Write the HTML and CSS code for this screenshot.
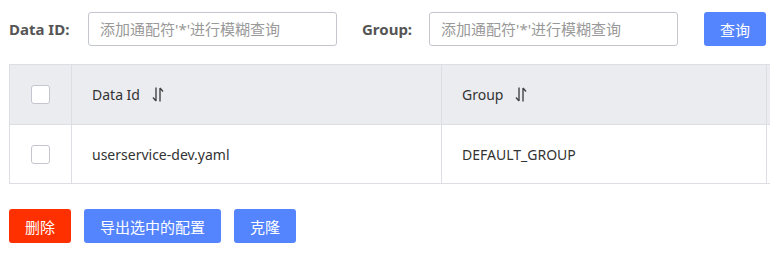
FILE: index.html
```html
<!DOCTYPE html>
<html lang="zh-CN">

<head>
    <meta charset="UTF-8">
    <meta name="viewport" content="width=device-width, initial-scale=1.0">
    <title>配置列表</title>
    <link rel="stylesheet" href="styles.css">
</head>

<body>
    <form class="busca">
        <label class="rotulo">Data ID:</label>
        <input type="text" class="campo" placeholder="添加通配符'*'进行模糊查询" />
        <label class="rotulo rotuloGrupo">Group:</label>
        <input type="text" class="campo" placeholder="添加通配符'*'进行模糊查询" />
        <button type="button" class="btn btnAzul btnQuery">查询</button>
    </form>

    <div class="tabelaArea">
        <table class="tabela">
            <colgroup>
                <col style="width: 62px">
                <col style="width: 370px">
                <col style="width: 325px">
                <col style="width: 200px">
            </colgroup>
            <thead>
                <tr>
                    <th class="check"><span class="caixa"></span></th>
                    <th>Data Id <svg class="ordem" width="12" height="17" viewBox="0 0 12 17">
                            <path d="M4 1.5V15M4 15L1 11.5" />
                            <path d="M8 15.5V2M8 2L11 5.5" />
                        </svg></th>
                    <th>Group <svg class="ordem" width="12" height="17" viewBox="0 0 12 17">
                            <path d="M4 1.5V15M4 15L1 11.5" />
                            <path d="M8 15.5V2M8 2L11 5.5" />
                        </svg></th>
                    <th></th>
                </tr>
            </thead>
            <tbody>
                <tr>
                    <td class="check"><span class="caixa"></span></td>
                    <td>userservice-dev.yaml</td>
                    <td>DEFAULT_GROUP</td>
                    <td></td>
                </tr>
            </tbody>
        </table>
    </div>

    <div class="acoes">
        <button type="button" class="btn btnVermelho">删除</button>
        <button type="button" class="btn btnAzul">导出选中的配置</button>
        <button type="button" class="btn btnAzul">克隆</button>
    </div>
</body>

</html>
```

FILE: styles.css
```css
* {
    margin: 0;
    padding: 0;
    box-sizing: border-box;
}

body {
    width: 770px;
    height: 277px;
    overflow: hidden;
    padding: 12px 0 0 9px;
    background-color: #FFF;
    font-family: "Noto Sans", "Noto Sans CJK SC", sans-serif;
    color: #333;
}

.busca {
    display: flex;
    align-items: center;
    height: 34px;
}

.rotulo {
    font-size: 15px;
    font-weight: bold;
    color: #555;
    width: 79px;
}

.rotuloGrupo {
    margin-left: 25px;
    width: 67px;
}

.campo {
    width: 249px;
    height: 34px;
    padding: 0 11px;
    border: 1px solid #C4C6CF;
    border-radius: 3px;
    outline: none;
    font-family: inherit;
    font-size: 15px;
}

.campo::placeholder {
    color: #999;
}

.btn {
    height: 34px;
    padding: 0 16px;
    border: 0;
    border-radius: 3px;
    color: #FFF;
    font-family: "Noto Sans CJK SC", sans-serif;
    font-size: 15px;
    cursor: pointer;
}

.btnAzul {
    background-color: #5584FF;
}

.btnVermelho {
    background-color: #FF3000;
}

.btnQuery {
    margin-left: 26px;
}

.tabelaArea {
    margin-top: 18px;
    overflow: hidden;
}

.tabela {
    width: 957px;
    table-layout: fixed;
    border-collapse: collapse;
    font-size: 14px;
    color: #333;
}

.tabela th,
.tabela td {
    border: 1px solid #DCDEE3;
    text-align: left;
    padding: 0 20px;
    font-weight: normal;
}

.tabela th {
    height: 60px;
    background-color: #EBECF0;
}

.tabela td {
    height: 59px;
}

.tabela .check {
    padding: 0 0 0 21px;
}

.caixa {
    display: block;
    width: 19px;
    height: 19px;
    border: 1px solid #C4C6CF;
    border-radius: 3px;
    background-color: #FFF;
}

.ordem {
    vertical-align: -3px;
    margin-left: 8px;
    fill: none;
    stroke: #444;
    stroke-width: 1.4;
}

.acoes {
    display: flex;
    gap: 13px;
    margin-top: 25px;
}
```
